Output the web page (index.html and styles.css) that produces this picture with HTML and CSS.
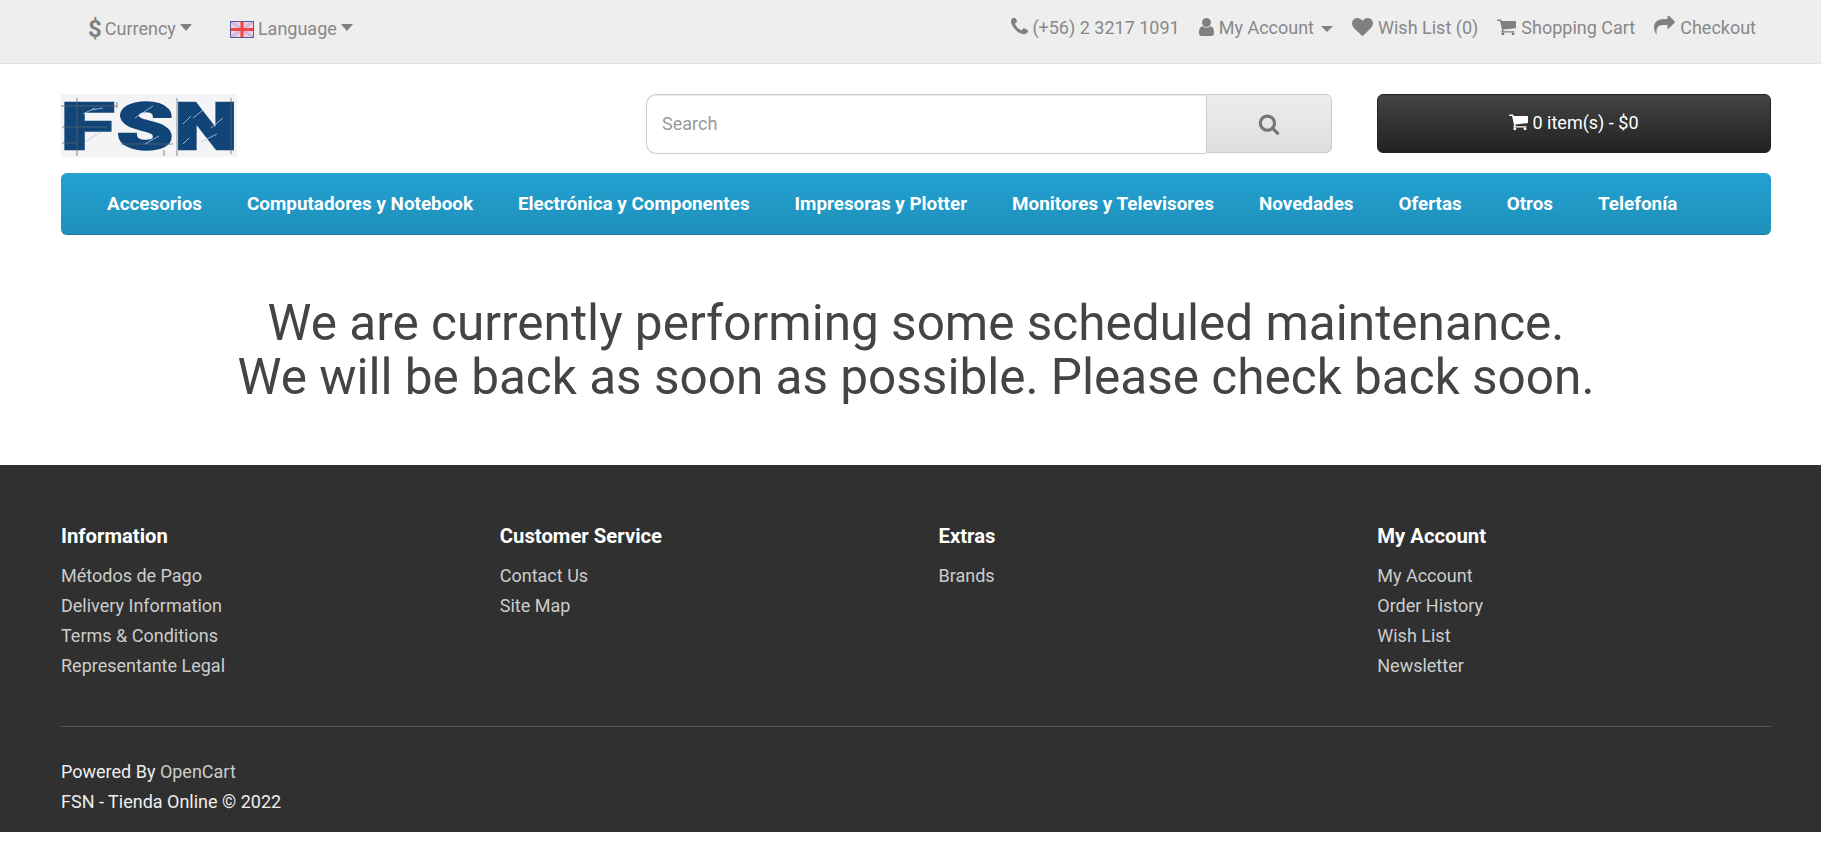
FILE: index.html
```html
<!DOCTYPE html>
<html lang="en">
<head>
<meta charset="utf-8">
<title>FSN - Tienda Online</title>
<link rel="stylesheet" href="styles.css">
</head>
<body>
<header class="topbar">
  <div class="top-left">
    <a class="top-item" href="#"><span class="dollar">$</span>Currency<i class="caret"></i></a>
    <a class="top-item" href="#"><svg class="flag" viewBox="0 0 24 17"><rect width="24" height="17" fill="#f6cfd8"/><path d="M0 0L24 17M24 0L0 17" stroke="#cdbbe2" stroke-width="3"/><path d="M12 0V17M0 8.500H24" stroke="#f04848" stroke-width="3.200"/><rect x=".5" y=".5" width="23" height="16" fill="none" stroke="#5a5a9e"/></svg>Language<i class="caret"></i></a>
  </div>
  <nav class="top-right">
    <a class="top-item" href="#"><svg class="ico ico-phone" viewBox="192 192 1408 1408"><path d="M1600 1240q0 27-10 70.500t-21 68.500q-21 50-122 106-94 51-186 51-27 0-53-3.500t-57.500-12.500-47-14.500-55.500-20.500-49-18q-98-35-175-83-127-79-264-216t-216-264q-48-77-83-175-3-9-18-49t-20.500-55.500-14.500-47-12.500-57.500-3.500-53q0-92 51-186 56-101 106-122 25-11 68.500-21t70.500-10q14 0 21 3 18 6 53 76 11 19 30 54t35 63.500 31 53.500q3 4 17.500 25t21.500 35.500 7 28.500q0 20-28.500 50t-62 55-62 53-28.500 46q0 9 5 22.500t8.500 20.500 14 24 11.500 19q76 137 174 235t235 174q2 1 19 11.500t24 14 20.500 8.500 22.500 5q18 0 46-28.500t53-62 55-62 50-28.500q14 0 28.500 7t35.500 21.500 25 17.500q25 15 53.500 31t63.500 35 54 30q70 35 76 53 3 7 3 21z"/></svg>(+56) 2 3217 1091</a>
    <a class="top-item" href="#"><svg class="ico ico-user" viewBox="256 128 1280 1536"><path d="M1536 1399q0 109-62.500 187t-150.500 78h-854q-88 0-150.500-78t-62.500-187q0-85 8.500-160.500t31.500-152 58.500-131 94-89 134.500-34.500q131 128 313 128t313-128q76 0 134.500 34.500t94 89 58.500 131 31.500 152 8.500 160.500zm-256-887q0 159-112.500 271.500t-271.500 112.500-271.500-112.500-112.500-271.500 112.500-271.500 271.500-112.500 271.500 112.500 112.500 271.500z"/></svg>My Account<i class="caret caret-small"></i></a>
    <a class="top-item" href="#"><svg class="ico ico-heart" viewBox="0 128 1792 1536"><path d="M896 1664q-26 0-44-18l-624-602q-10-8-27.500-26t-55.500-65.500-68-97.500-53.500-121-23.500-138q0-220 127-344t351-124q62 0 126.500 21.500t120 58 95.500 68.500 76 68q36-36 76-68t95.500-68.500 120-58 126.500-21.500q224 0 351 124t127 344q0 221-229 450l-623 600q-18 18-44 18z"/></svg>Wish List (0)</a>
    <a class="top-item" href="#"><svg class="ico ico-cart" viewBox="64 128 1664 1536"><path d="M704 1536q0 52-38 90t-90 38-90-38-38-90 38-90 90-38 90 38 38 90zm896 0q0 52-38 90t-90 38-90-38-38-90 38-90 90-38 90 38 38 90zm128-1088v512q0 24-16.500 42.500t-40.500 21.500l-1044 122q13 60 13 70 0 16-24 64h920q26 0 45 19t19 45-19 45-45 19h-1024q-26 0-45-19t-19-45q0-11 8-31.500t16-36 21.500-40 15.500-29.500l-177-823h-204q-26 0-45-19t-19-45 19-45 45-19h256q16 0 28.500 6.500t19.500 15.500 13 24.500 8 26 5.500 29.500 4.500 26h1201q26 0 45 19t19 45z"/></svg>Shopping Cart</a>
    <a class="top-item" href="#"><svg class="ico ico-share" viewBox="0 128 1792 1536"><path d="M1792 640q0 26-19 45l-512 512q-19 19-45 19t-45-19-19-45v-256h-224q-98 0-175.500 6t-154 21.500-133 42.500-105.500 69.500-80 101-48.500 138.500-17.500 181q0 55 5 123 0 6 2.500 23.500t2.500 26.500q0 15-8.500 25t-23.500 10q-16 0-28-17-7-9-13-22t-13.500-30-10.500-24q-127-285-127-451 0-199 53-333 162-403 875-403h224v-256q0-26 19-45t45-19 45 19l512 512q19 19 19 45z"/></svg>Checkout</a>
  </nav>
</header>

<div class="container">
  <div class="brand-row">
    <a class="logo" href="#">
      <svg viewBox="0 -12 176 87" width="176" height="87">
        <rect width="176" height="63" fill="#f4f4f6"/>
        <g class="logo-text">
          <text x="0" y="55" textLength="53" lengthAdjust="spacingAndGlyphs">F</text>
          <text x="56" y="55" textLength="56" lengthAdjust="spacingAndGlyphs">S</text>
          <text x="114" y="55" textLength="62" lengthAdjust="spacingAndGlyphs">N</text>
        </g>
        <g stroke="#5c6670" stroke-width="1" fill="none" opacity=".75">
          <path d="M0 12H56M1 33H46M1 49H16M16 4V62M116 4V62M170 4V60M56 8V14M103 56V62M60 50H112"/>
        </g>
        <g stroke="#b9cbe0" stroke-width="1" opacity=".8">
          <path d="M22 20L34 14M24 48L40 38M74 24L92 12M84 50L98 42M132 24L142 16M150 34L162 24M30 16L42 14M140 48L156 40M122 30L130 22M122 50L128 44"/>
        </g>
      </svg>
    </a>
    <form class="search">
      <input class="search-input" type="text" placeholder="Search">
      <button class="search-btn" type="button" aria-label="Search"><svg viewBox="0 0 1792 1792"><path d="M1216 832q0-185-131.500-316.500t-316.500-131.500-316.500 131.500-131.500 316.500 131.500 316.500 316.500 131.500 316.500-131.500 131.500-316.500zm512 832q0 52-38 90t-90 38q-54 0-90-38l-343-342q-179 124-399 124-143 0-273.500-55.500t-225-150-150-225-55.500-273.500 55.500-273.500 150-225 225-150 273.500-55.500 273.500 55.500 225 150 150 225 55.500 273.500q0 220-124 399l343 343q37 37 37 90z"/></svg></button>
    </form>
    <button class="cart" type="button"><svg viewBox="64 128 1664 1536"><path d="M704 1536q0 52-38 90t-90 38-90-38-38-90 38-90 90-38 90 38 38 90zm896 0q0 52-38 90t-90 38-90-38-38-90 38-90 90-38 90 38 38 90zm128-1088v512q0 24-16.500 42.500t-40.500 21.500l-1044 122q13 60 13 70 0 16-24 64h920q26 0 45 19t19 45-19 45-45 19h-1024q-26 0-45-19t-19-45q0-11 8-31.500t16-36 21.500-40 15.500-29.500l-177-823h-204q-26 0-45-19t-19-45 19-45 45-19h256q16 0 28.500 6.500t19.500 15.500 13 24.500 8 26 5.500 29.500 4.500 26h1201q26 0 45 19t19 45z"/></svg>0 item(s) - $0</button>
  </div>
  <nav class="menu">
    <a href="#">Accesorios</a>
    <a href="#">Computadores y Notebook</a>
    <a href="#">Electrónica y Componentes</a>
    <a href="#">Impresoras y Plotter</a>
    <a href="#">Monitores y Televisores</a>
    <a href="#">Novedades</a>
    <a href="#">Ofertas</a>
    <a href="#">Otros</a>
    <a href="#">Telefonía</a>
  </nav>
  <h1 class="notice">We are currently performing some scheduled maintenance.<br>We will be back as soon as possible. Please check back soon.</h1>
</div>

<footer class="footer">
  <div class="footer-inner">
    <div class="footer-cols">
      <section>
        <h5>Information</h5>
        <ul>
          <li><a href="#">Métodos de Pago</a></li>
          <li><a href="#">Delivery Information</a></li>
          <li><a href="#">Terms &amp; Conditions</a></li>
          <li><a href="#">Representante Legal</a></li>
        </ul>
      </section>
      <section>
        <h5>Customer Service</h5>
        <ul>
          <li><a href="#">Contact Us</a></li>
          <li><a href="#">Site Map</a></li>
        </ul>
      </section>
      <section>
        <h5>Extras</h5>
        <ul>
          <li><a href="#">Brands</a></li>
        </ul>
      </section>
      <section>
        <h5>My Account</h5>
        <ul>
          <li><a href="#">My Account</a></li>
          <li><a href="#">Order History</a></li>
          <li><a href="#">Wish List</a></li>
          <li><a href="#">Newsletter</a></li>
        </ul>
      </section>
    </div>
    <hr class="rule">
    <p class="powered">Powered By <a href="#">OpenCart</a><br>FSN - Tienda Online © 2022</p>
  </div>
</footer>
</body>
</html>
```
FILE: styles.css
```css
* { box-sizing: border-box; }
html, body { margin: 0; padding: 0; }
body {
  background: #fff;
  color: #444;
  font-family: Roboto, "Liberation Sans", sans-serif;
  font-size: 18px;
  line-height: 30px;
}
a { color: inherit; text-decoration: none; }

.topbar {
  height: 64px;
  background: #eeeeee;
  border-bottom: 1px solid #e2e2e2;
  display: flex;
  justify-content: space-between;
  align-items: flex-start;
  padding: 0 65px 0 88px;
  color: #888;
}
.top-left { display: flex; gap: 38px; padding-top: 14px; }
.top-right { display: flex; gap: 19px; padding-top: 13px; }
.top-item { display: flex; align-items: center; height: 30px; white-space: nowrap; }
.dollar { font-size: 24px; font-weight: 700; color: #808080; margin-right: 3px; }
.flag { width: 24px; height: 17px; margin-right: 4px; flex: none; }
.caret {
  display: block;
  width: 0; height: 0;
  margin: -4px 0 0 4px;
  border-left: 6px solid transparent;
  border-right: 6px solid transparent;
  border-top: 7px solid #808080;
}
.caret-small {
  margin: 2px 0 0 7px;
  border-top-width: 6px;
}
.ico { fill: #808080; margin: -3px 5px 0 0; flex: none; }
.ico-phone { width: 17px; height: 17px; margin-right: 4px; }
.ico-user { width: 15px; height: 18px; }
.ico-heart { width: 21px; height: 18px; }
.ico-cart { width: 19px; height: 17.500px; }
.ico-share { width: 21px; height: 18px; margin-top: -7px; }

.container { width: 1710px; margin: 0 0 0 61px; }
.brand-row { display: flex; align-items: flex-start; padding-top: 30px; height: 109px; }
.logo { width: 176px; height: 63px; display: block; }
.logo svg { display: block; margin-top: -12px; filter: blur(.4px); }
.logo-text {
  font-family: Roboto, sans-serif;
  font-weight: 900;
  font-size: 64px;
  fill: #124577;
  stroke: #124577;
  stroke-width: 2.500px;
  stroke-linejoin: miter;
}

.search { display: flex; width: 686px; height: 60px; margin-left: 409px; }
.search-input {
  flex: 1;
  min-width: 0;
  height: 60px;
  border: 1px solid #ccc;
  border-right: 0;
  border-radius: 10px 0 0 10px;
  padding: 0 15px 2px;
  font: 18px Roboto, sans-serif;
  color: #555;
  background: #fff;
  box-shadow: inset 0 1px 1px rgba(0,0,0,.08);
  outline: 0;
}
.search-input::placeholder { color: #999; opacity: 1; }
.search-btn {
  width: 126px;
  height: 59px;
  padding: 0;
  border: 1px solid #ccc;
  border-radius: 0 6px 6px 0;
  background: linear-gradient(#eeeeee, #dddddd);
  display: flex;
  align-items: center;
  justify-content: center;
}
.search-btn svg { width: 22px; height: 22px; fill: #777; }
.cart {
  width: 394px;
  height: 59px;
  margin-left: 45px;
  padding: 0 0 2px;
  border: 1px solid #222;
  border-radius: 6px;
  background: linear-gradient(#444444, #222222);
  color: #fff;
  font: 18px Roboto, sans-serif;
  display: flex;
  align-items: center;
  justify-content: center;
  cursor: pointer;
}
.cart svg { width: 19px; height: 17.500px; fill: #fff; margin: -2px 4px 0 0; }

.menu {
  height: 62px;
  display: flex;
  align-items: center;
  gap: 45px;
  padding: 0 46px;
  border-radius: 6px;
  background: linear-gradient(#23a1d1, #1f90bb);
  border-bottom: 1px solid #1a7a9f;
  color: #fff;
  font-size: 18.850px;
  font-weight: 700;
  white-space: nowrap;
}

.notice {
  margin: 0;
  padding: 61px 0 61px;
  text-align: center;
  font-size: 49.500px;
  line-height: 54px;
  font-weight: 400;
  color: #444;
}

.footer { height: 367px; background: #303030; color: #ccc; }
.footer-inner { width: 1710px; margin: 0 0 0 61px; padding-top: 56px; }
.footer-cols { display: grid; grid-template-columns: repeat(4, 438.750px); height: 205px; }
.footer h5 { margin: 0 0 10px; font-size: 20.300px; line-height: 30px; font-weight: 700; color: #fff; }
.footer ul { margin: 0; padding: 0; list-style: none; }
.footer li { height: 30px; }
.rule { margin: 0 0 30px; border: 0; border-top: 1px solid #555; }
.powered { margin: 0; color: #eee; }
.powered a { color: #ccc; }
```
